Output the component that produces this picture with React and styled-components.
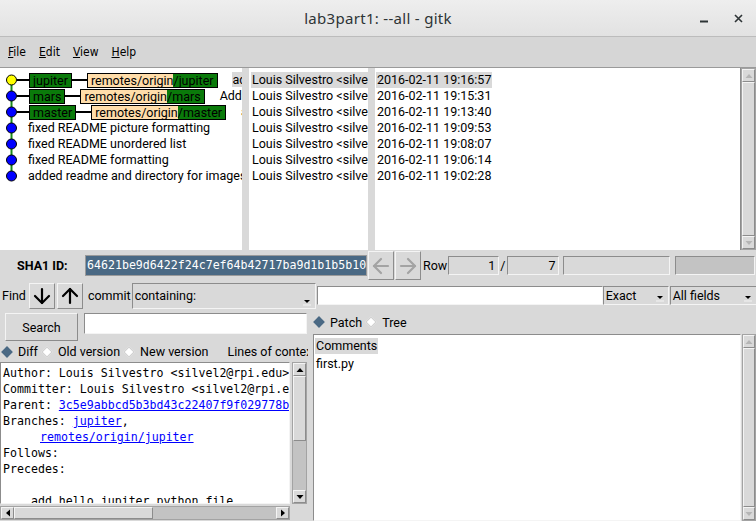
import React from 'react'
import styled, { createGlobalStyle } from 'styled-components'
import { ArrowDown, ArrowUp, ArrowLeft, ArrowRight } from 'lucide-react'

const SANS = 'Roboto, "Liberation Sans", sans-serif'
const MONO = '"DejaVu Sans Mono", "Liberation Mono", monospace'
const GREEN = '#0a7a0a'
const PEACH = '#ffddaa'
const SEL = '#d9d9d9'

const GlobalStyle = createGlobalStyle`
  html, body { margin: 0; padding: 0; background: #d9d9d9; }
`

const commits = [
  { head: 'jupiter', msg: 'add hello jupiter python file', date: '2016-02-11 19:16:57', dot: '#ffff00', selected: true },
  { head: 'mars', msg: 'Added hello mars python file', date: '2016-02-11 19:15:31', dot: '#0000ff' },
  { head: 'master', msg: 'added hello world python file', date: '2016-02-11 19:13:40', dot: '#0000ff' },
  { msg: 'fixed README picture formatting', date: '2016-02-11 19:09:53', dot: '#0000ff' },
  { msg: 'fixed README unordered list', date: '2016-02-11 19:08:07', dot: '#0000ff' },
  { msg: 'fixed README formatting', date: '2016-02-11 19:06:14', dot: '#0000ff' },
  { msg: 'added readme and directory for images', date: '2016-02-11 19:02:28', dot: '#0000ff' },
]

const Window = styled.div`
  width: 756px;
  height: 521px;
  overflow: hidden;
  display: flex;
  flex-direction: column;
  background: #d9d9d9;
  color: #000;
  font-family: ${SANS};
  font-size: 12.5px;
`

const TitleBar = styled.div`
  height: 36px;
  flex: none;
  display: grid;
  grid-template-columns: 1fr auto 1fr;
  align-items: center;
  background: linear-gradient(#eeeeee, #e2e2e2);
  border-bottom: 1px solid #bcbcbc;
`

const Title = styled.div`
  grid-column: 2;
  font-family: "Noto Sans", ${SANS};
  font-size: 15px;
  letter-spacing: 0.3px;
  color: #2e3436;
`

const WinControls = styled.div`
  justify-self: end;
  display: flex;
  align-items: center;
  gap: 26px;
  padding-right: 13px;
`

const MenuBar = styled.div`
  height: 30px;
  flex: none;
  display: flex;
  align-items: center;
  gap: 13px;
  padding-left: 8px;
  background: #d6d6d6;
  border-bottom: 1px solid #9a9a9a;
  font-family: "DejaVu Sans Condensed", "Liberation Sans Narrow", ${SANS};
  font-size: 12px;
  u { text-decoration: underline; }
`

const TopPanes = styled.div`
  height: 182px;
  flex: none;
  display: flex;
  gap: 7px;
`

const ListPane = styled.div`
  width: ${p => p.$w}px;
  flex: none;
  background: #fff;
  overflow: hidden;
  white-space: nowrap;
  padding: 4px 0 0 ${p => p.$pad || 0}px;
  box-sizing: border-box;
`

const DateArea = styled.div`
  flex: 1;
  display: flex;
  min-width: 0;
`

const DatePane = styled(ListPane)`
  flex: 1;
  border-right: 1px solid #8c8c8c;
`

const Row = styled.div`
  height: 16px;
  display: flex;
  align-items: center;
`

const Cell = styled.span`
  line-height: 16px;
  padding: 0 1px;
  background: ${p => (p.$sel ? SEL : 'transparent')};
`

const Msg = styled.span`
  margin-left: ${p => p.$gap}px;
  line-height: 16px;
`

const Link = styled.span`
  width: ${p => p.$w}px;
  height: 2px;
  background: #000;
  flex: none;
`

const Tag = styled.span`
  display: flex;
  height: 15px;
  border: 1px solid #000;
  box-sizing: border-box;
  background: ${GREEN};
  flex: none;
`

const TagPart = styled.span`
  line-height: 13px;
  padding: ${p => p.$pad};
  background: ${p => p.$bg};
`

const ShaRow = styled.div`
  height: 31px;
  flex: none;
  display: flex;
  align-items: center;
`

const ShaLabel = styled.span`
  width: 85px;
  padding-left: 17px;
  box-sizing: border-box;
  font-weight: 700;
`

const ShaEntry = styled.div`
  width: 282px;
  height: 21px;
  box-sizing: border-box;
  border: 1px solid #9a9a9a;
  background: #4a6984;
  color: #fff;
  font-family: ${MONO};
  font-size: 11.6px;
  line-height: 19px;
  padding-left: 1px;
  white-space: nowrap;
  overflow: hidden;
`

const Button = styled.div`
  width: ${p => p.$w}px;
  height: ${p => p.$h}px;
  box-sizing: border-box;
  flex: none;
  display: flex;
  align-items: center;
  justify-content: center;
  background: #d9d9d9;
  border: 1px solid;
  border-color: #f4f4f4 #8c8c8c #8c8c8c #f4f4f4;
  margin-left: ${p => p.$ml || 0}px;
  color: ${p => (p.$disabled ? '#a3a3a3' : '#000')};
`

const Label = styled.span`
  margin: 0 ${p => p.$mr || 0}px 0 ${p => p.$ml || 0}px;
  white-space: nowrap;
`

const Entry = styled.div`
  width: ${p => p.$w}px;
  height: ${p => p.$h || 19}px;
  box-sizing: border-box;
  flex: none;
  border: 1px solid;
  border-color: #8c8c8c #f4f4f4 #f4f4f4 #8c8c8c;
  background: ${p => p.$bg || '#d9d9d9'};
  text-align: ${p => p.$align || 'left'};
  padding: 0 3px;
  line-height: 17px;
  margin-left: ${p => p.$ml || 0}px;
`

const FindRow = styled.div`
  height: 29px;
  flex: none;
  display: flex;
  align-items: flex-start;
  & > * { align-self: center; }
`

const Combo = styled.div`
  width: ${p => p.$w}px;
  height: ${p => p.$h}px;
  box-sizing: border-box;
  flex: none;
  display: flex;
  border: 1px solid;
  border-color: #8c8c8c #f4f4f4 #f4f4f4 #8c8c8c;
  padding-left: 2px;
  margin-left: ${p => p.$ml || 0}px;
`

const ComboText = styled.span`
  flex: 1;
  align-self: center;
  white-space: nowrap;
`

const DropMark = styled.span`
  align-self: flex-end;
  display: flex;
  margin: 0 3px 2px 0;
`

const Bottom = styled.div`
  flex: 1;
  min-height: 0;
  display: flex;
  gap: 5px;
`

const LeftCol = styled.div`
  width: 308px;
  flex: none;
  display: flex;
  flex-direction: column;
  overflow: hidden;
`

const RightCol = styled.div`
  flex: 1;
  min-width: 0;
  display: flex;
  flex-direction: column;
`

const SearchRow = styled.div`
  height: 31px;
  flex: none;
  display: flex;
  align-items: flex-start;
  padding: 3px 0 0 5px;
  box-sizing: border-box;
`

const RadioRow = styled.div`
  height: ${p => p.$h}px;
  flex: none;
  display: flex;
  align-items: center;
  white-space: nowrap;
`

const Diamond = styled.span`
  width: 8px;
  height: 8px;
  box-sizing: border-box;
  flex: none;
  transform: rotate(45deg);
  margin: 0 7px 0 ${p => p.$ml}px;
  background: ${p => (p.$on ? '#4a6984' : '#fff')};
  border: 1px solid ${p => (p.$on ? '#4a6984' : '#cfcfcf')};
`

const TextArea = styled.div`
  flex: 1;
  min-height: 0;
  display: flex;
  flex-direction: column;
  gap: 2px;
  padding-bottom: 1px;
`

const TextTop = styled.div`
  flex: 1;
  min-height: 0;
  display: flex;
  gap: 2px;
`

const TextBox = styled.div`
  width: 290px;
  flex: none;
  background: #fff;
  border: 1px solid;
  border-color: #8c8c8c #f4f4f4 #f4f4f4 #8c8c8c;
  box-sizing: border-box;
  overflow: hidden;
  padding: 2px 0 0 2px;
  font-family: ${MONO};
  font-size: 11.6px;
`

const Line = styled.div`
  height: 16px;
  flex: none;
  line-height: 16px;
  white-space: pre;
  padding-left: ${p => p.$indent || 0}px;
  a { color: #0000ff; text-decoration: underline; }
`

const FileArea = styled.div`
  flex: 1;
  min-height: 0;
  display: flex;
  gap: 1px;
`

const FileBox = styled.div`
  flex: 1;
  background: #fff;
  border: 1px solid;
  border-color: #8c8c8c #f4f4f4 #f4f4f4 #8c8c8c;
  padding: 2px 0 0 1px;
`

const FileItem = styled.div`
  height: 18px;
  display: flex;
  align-items: center;
`

const Bar = styled.div`
  display: flex;
  flex: none;
  flex-direction: ${p => (p.$vertical ? 'column' : 'row')};
  ${p => (p.$vertical ? `width: ${p.$size}px;` : `height: ${p.$size}px; width: ${p.$len}px;`)}
  background: #c3c3c3;
  border: 1px solid #a3a3a3;
  box-sizing: border-box;
`

const BarArrow = styled.div`
  flex: none;
  ${p => (p.$vertical ? 'height: 11px;' : 'width: 11px;')}
  display: flex;
  align-items: center;
  justify-content: center;
  background: #d9d9d9;
  border: 1px solid;
  border-color: #f4f4f4 #8c8c8c #8c8c8c #f4f4f4;
`

const Thumb = styled.div`
  flex: ${p => p.$grow};
  background: #d9d9d9;
  border: 1px solid;
  border-color: #f4f4f4 #8c8c8c #8c8c8c #f4f4f4;
`

const Trough = styled.div`
  flex: ${p => p.$grow};
`

const Tri = ({ dir, color }) => {
  const pts = {
    up: '0.5,5 7.5,5 4,1',
    down: '0.5,1 7.5,1 4,5',
    left: '5,0.5 5,7.5 1,4',
    right: '1,0.5 1,7.5 5,4',
  }[dir]
  const horiz = dir === 'left' || dir === 'right'
  return (
    <svg width={horiz ? 6 : 8} height={horiz ? 8 : 6} viewBox={horiz ? '0 0 6 8' : '0 0 8 6'}>
      <polygon points={pts} fill={color} />
    </svg>
  )
}

const Scrollbar = ({ vertical, size = 15, len, thumb = 1, after = 0, disabled }) => {
  const c = disabled ? '#b5b5b5' : '#000'
  return (
    <Bar $vertical={vertical} $size={size} $len={len}>
      <BarArrow $vertical={vertical}><Tri dir={vertical ? 'up' : 'left'} color={c} /></BarArrow>
      <Thumb $grow={thumb} />
      {after > 0 && <Trough $grow={after} />}
      <BarArrow $vertical={vertical}><Tri dir={vertical ? 'down' : 'right'} color={c} /></BarArrow>
    </Bar>
  )
}

const Node = ({ first, last, color }) => (
  <svg width="17" height="16" viewBox="0 0 17 16" style={{ flex: 'none' }}>
    <line x1="11.5" y1={first ? 8 : 0} x2="11.5" y2={last ? 8 : 16} stroke="#1a8a1a" strokeWidth="2" />
    <circle cx="11.5" cy="8" r="5" fill={color} stroke="#000" strokeWidth="1" />
  </svg>
)

const Drop = () => (
  <DropMark>
    <svg width="10" height="7" viewBox="0 0 10 7">
      <polygon points="2,1 8,1 5,4" fill="#000" />
      <line x1="1" y1="6" x2="9" y2="6" stroke="#f4f4f4" strokeWidth="1" />
    </svg>
  </DropMark>
)

const WinMin = () => (
  <svg width="8" height="10" viewBox="0 0 8 10">
    <line x1="0" y1="8.5" x2="8" y2="8.5" stroke="#2e3436" strokeWidth="2" />
  </svg>
)

const WinClose = () => (
  <svg width="9" height="9" viewBox="0 0 9 9">
    <path d="M1 1 L8 8 M8 1 L1 8" stroke="#2e3436" strokeWidth="1.6" />
  </svg>
)

const GraphRow = ({ c, i, n }) => (
  <Row>
    <Node first={i === 0} last={i === n - 1} color={c.dot} />
    {c.head ? (
      <>
        <Link $w={12} />
        <Tag><TagPart $pad="0 3px">{c.head}</TagPart></Tag>
        <Link $w={15} />
        <Tag>
          <TagPart $bg={PEACH} $pad="0 0 0 3px">remotes/origin</TagPart>
          <TagPart $pad="0 3px 0 0">/{c.head}</TagPart>
        </Tag>
        <Msg $gap={14}><Cell $sel={c.selected}>{c.msg}</Cell></Msg>
      </>
    ) : (
      <Msg $gap={10}><Cell>{c.msg}</Cell></Msg>
    )}
  </Row>
)

const App = () => (
  <>
    <GlobalStyle />
    <Window>
      <TitleBar>
        <Title>lab3part1: --all - gitk</Title>
        <WinControls>
          <WinMin />
          <WinClose />
        </WinControls>
      </TitleBar>

      <MenuBar>
        <span><u>F</u>ile</span>
        <span><u>E</u>dit</span>
        <span><u>V</u>iew</span>
        <span><u>H</u>elp</span>
      </MenuBar>

      <TopPanes>
        <ListPane $w={242}>
          {commits.map((c, i) => <GraphRow key={i} c={c} i={i} n={commits.length} />)}
        </ListPane>
        <ListPane $w={119} $pad={2}>
          {commits.map((c, i) => (
            <Row key={i}><Cell $sel={c.selected}>Louis Silvestro &lt;silvel2@rpi.edu&gt;</Cell></Row>
          ))}
        </ListPane>
        <DateArea>
          <DatePane $pad={1}>
            {commits.map((c, i) => (
              <Row key={i}><Cell $sel={c.selected}>{c.date}</Cell></Row>
            ))}
          </DatePane>
          <Scrollbar vertical size={15} disabled />
        </DateArea>
      </TopPanes>

      <ShaRow>
        <ShaLabel>SHA1 ID:</ShaLabel>
        <ShaEntry>64621be9d6422f24c7ef64b42717ba9d1b1b5b10</ShaEntry>
        <Button $w={26} $h={29} $ml={1} $disabled><ArrowLeft size={24} strokeWidth={2.2} /></Button>
        <Button $w={26} $h={29} $ml={1} $disabled><ArrowRight size={24} strokeWidth={2.2} /></Button>
        <Label $ml={2} $mr={1}>Row</Label>
        <Entry $w={51} $align="right">1</Entry>
        <Label $ml={1} $mr={2}>/</Label>
        <Entry $w={52} $align="right">7</Entry>
        <Entry $w={107} $ml={4} />
        <Entry $w={80} $ml={5} $bg="#c3c3c3" />
      </ShaRow>

      <FindRow>
        <Label $ml={2} $mr={3}>Find</Label>
        <Button $w={26} $h={26}><ArrowDown size={26} strokeWidth={2.2} /></Button>
        <Button $w={26} $h={26} $ml={2}><ArrowUp size={26} strokeWidth={2.2} /></Button>
        <Label $ml={5} $mr={1}>commit</Label>
        <Combo $w={184} $h={26}><ComboText>containing:</ComboText><Drop /></Combo>
        <Entry $w={286} $h={19} $ml={1} $bg="#fff" />
        <Combo $w={66} $h={19}><ComboText>Exact</ComboText><Drop /></Combo>
        <Combo $w={87} $h={19} $ml={1}><ComboText>All fields</ComboText><Drop /></Combo>
      </FindRow>

      <Bottom>
        <LeftCol>
          <SearchRow>
            <Button $w={73} $h={28}>Search</Button>
            <Entry $w={223} $h={21} $ml={6} $bg="#fff" />
          </SearchRow>
          <RadioRow $h={21}>
            <Diamond $on $ml={3} />
            <Label>Diff</Label>
            <Diamond $ml={5} />
            <Label>Old version</Label>
            <Diamond $ml={5} />
            <Label>New version</Label>
            <Label $ml={19}>Lines of context:</Label>
          </RadioRow>
          <TextArea>
            <TextTop>
              <TextBox>
                <Line>Author: Louis Silvestro &lt;silvel2@rpi.edu&gt;  2016-02-11 19:16:57</Line>
                <Line>Committer: Louis Silvestro &lt;silvel2@rpi.edu&gt;  2016-02-11 19:16:57</Line>
                <Line>Parent: <a>3c5e9abbcd5b3bd43c22407f9f029778b2c41e07</a> (Added hello mars python file)</Line>
                <Line>Branches: <a>jupiter</a>,</Line>
                <Line $indent={37}><a>remotes/origin/jupiter</a></Line>
                <Line>Follows:</Line>
                <Line>Precedes:</Line>
                <Line> </Line>
                <Line>    add hello jupiter python file</Line>
              </TextBox>
              <Scrollbar vertical size={15} thumb={69} after={53} />
            </TextTop>
            <Scrollbar size={14} len={290} thumb={143} after={128} />
          </TextArea>
        </LeftCol>

        <RightCol>
          <RadioRow $h={24}>
            <Diamond $on $ml={2} />
            <Label>Patch</Label>
            <Diamond $ml={5} />
            <Label>Tree</Label>
          </RadioRow>
          <FileArea>
            <FileBox>
              <FileItem><Cell $sel>Comments</Cell></FileItem>
              <FileItem><Cell>first.py</Cell></FileItem>
            </FileBox>
            <Scrollbar vertical size={14} disabled />
          </FileArea>
        </RightCol>
      </Bottom>
    </Window>
  </>
)

export default App
